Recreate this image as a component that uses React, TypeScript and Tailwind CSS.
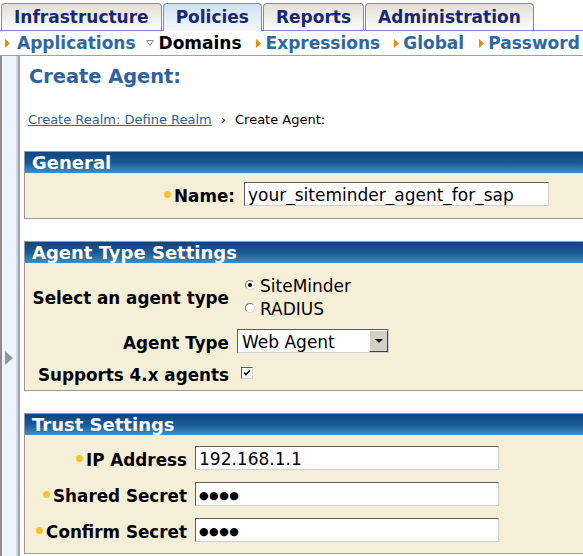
import React from "react";

const F = "font-['DejaVu_Sans',Verdana,sans-serif]";

function OrangeArrow() {
  return (
    <svg width="5" height="9" viewBox="0 0 5 9" className="shrink-0">
      <path d="M0 0 L5 4.5 L0 9 Z" fill="#f08a00" />
    </svg>
  );
}

function DownArrow() {
  return (
    <svg width="8" height="6" viewBox="0 0 8 6" className="shrink-0">
      <path d="M0.5 0.5 L7.5 0.5 L4 5.5 Z" fill="none" stroke="#8a8a8a" strokeWidth="1" />
    </svg>
  );
}

function Dot() {
  return <span className="inline-block w-[7px] h-[7px] rounded-full bg-[#f7c232] mr-[3px] mb-[3px] shrink-0" />;
}

function SectionHeader({ title }: { title: string }) {
  return (
    <div className="h-[21px] bg-gradient-to-b from-[#0f4580] via-[#1a5893] to-[#3f8fc6] text-white font-bold text-[18px] leading-[21px] pl-[7px]">
      {title}
    </div>
  );
}

function TextBox({ value, width, password }: { value: string; width: number; password?: boolean }) {
  return (
    <div
      className="h-[24px] bg-white border border-t-[#5c5c5c] border-l-[#5c5c5c] border-b-[#d0d0d0] border-r-[#d0d0d0] flex items-center pl-[3px] pt-[3px] text-[17px] text-black leading-[19px] whitespace-nowrap overflow-hidden"
      style={{ width }}
    >
      {password ? <span className="text-[11px] tracking-[0.5px] leading-[19px]">●●●●</span> : value}
    </div>
  );
}

const LABEL = "h-[24px] pt-[4px] leading-[20px] font-bold text-black whitespace-nowrap";

export default function App() {
  const tabs = [
    { name: "Infrastructure", active: false },
    { name: "Policies", active: true },
    { name: "Reports", active: false },
    { name: "Administration", active: false },
  ];
  return (
    <div className={`${F} w-[583px] h-[556px] overflow-hidden bg-white flex flex-col`}>
      {/* Tabs */}
      <div className="h-[31px] shrink-0 flex items-end pl-[1px] gap-[1px] border-b border-[#7a8aba]">
        {tabs.map((t) => (
          <div
            key={t.name}
            className={`h-[27px] px-[12px] border border-b-0 border-[#8c8c8c] rounded-t-[4px] text-[17px] font-bold text-[#17286e] leading-[26px] whitespace-nowrap ${
              t.active
                ? "bg-gradient-to-b from-[#cfe1f4] to-[#f6f9fd] -mb-px h-[28px]"
                : "bg-gradient-to-b from-[#e3dfd6] to-[#fcfcfb]"
            }`}
          >
            {t.name}
          </div>
        ))}
      </div>
      {/* Sub nav */}
      <div className="h-[25px] shrink-0 flex items-center pl-[5px] border-b border-[#a0a0a0] text-[17px] font-bold leading-[24px] whitespace-nowrap">
        <div className="flex items-center gap-[7px] text-[#2f67a3]">
          <OrangeArrow />
          <span>Applications</span>
        </div>
        <div className="flex items-center gap-[5px] ml-[10px] text-black">
          <DownArrow />
          <span>Domains</span>
        </div>
        <div className="flex items-center gap-[5px] ml-[14px] text-[#2f67a3]">
          <OrangeArrow />
          <span>Expressions</span>
        </div>
        <div className="flex items-center gap-[4px] ml-[14px] text-[#2f67a3]">
          <OrangeArrow />
          <span>Global</span>
        </div>
        <div className="flex items-center gap-[4px] ml-[15px] text-[#2f67a3]">
          <OrangeArrow />
          <span>Password</span>
        </div>
      </div>
      {/* Main */}
      <div className="flex-1 flex min-h-0">
        {/* Sidebar */}
        <div className="w-[20px] shrink-0 flex">
          <div className="w-[2px] bg-[#8e8e8e]" />
          <div className="flex-1 bg-[#eef4fe] flex flex-col items-center">
            <svg width="8" height="14" viewBox="0 0 8 14" className="mt-[295px] ml-[-1px]">
              <path d="M0 0 L8 7 L0 14 Z" fill="#8a98a6" />
            </svg>
          </div>
          <div className="w-[2px] bg-[#c9d7e9]" />
          <div className="w-[2px] bg-[#9ea4ac]" />
        </div>
        {/* Content */}
        <div className="flex-1 min-w-0">
          <div className="ml-[9px] mt-[9px] text-[19.4px] leading-[23px] font-bold text-[#30629b]">Create Agent:</div>
          <div className="ml-[8px] mt-[24px] text-[13px] leading-[16px] whitespace-nowrap">
            <span className="text-[#30629b] underline">Create Realm: Define Realm</span>
            <span className="text-black mx-[9px]">›</span>
            <span className="text-black">Create Agent:</span>
          </div>

          {/* General */}
          <div className="ml-[4px] mt-[23px] w-[620px] border border-[#9a9a9a] bg-[#f6efd8]">
            <SectionHeader title="General" />
            <div className="pt-[9px] pb-[12px] flex items-center text-[16.8px]">
              <div className={`w-[210px] flex justify-end items-center ${LABEL}`}>
                <Dot />
                <span>Name:</span>
              </div>
              <div className="ml-[9px]">
                <TextBox value="your_siteminder_agent_for_sap" width={305} />
              </div>
            </div>
          </div>

          {/* Agent Type Settings */}
          <div className="ml-[4px] mt-[22px] w-[620px] border border-[#9a9a9a] bg-[#f6efd8]">
            <SectionHeader title="Agent Type Settings" />
            <div className="pt-[10px] pb-[5px] text-[16.8px]">
              <div className="flex items-center">
                <div className={`w-[204px] text-right ${LABEL}`}>Select an agent type</div>
                <div className="ml-[8px] flex flex-col text-[17px] text-black">
                  <div className="h-[23px] flex items-center">
                    <span className="ml-[8px] w-[10px] h-[10px] rounded-full border border-t-[#707070] border-l-[#707070] border-b-[#dcdcdc] border-r-[#dcdcdc] bg-white flex items-center justify-center">
                      <span className="w-[4px] h-[4px] rounded-full bg-black" />
                    </span>
                    <span className="ml-[5px] pt-[2px] leading-[20px]">SiteMinder</span>
                  </div>
                  <div className="h-[23px] flex items-center">
                    <span className="ml-[8px] w-[10px] h-[10px] rounded-full border border-t-[#707070] border-l-[#707070] border-b-[#dcdcdc] border-r-[#dcdcdc] bg-white" />
                    <span className="ml-[5px] pt-[2px] leading-[20px]">RADIUS</span>
                  </div>
                </div>
              </div>
              <div className="flex items-center mt-[10px] h-[24px]">
                <div className={`w-[204px] text-right ${LABEL}`}>Agent Type</div>
                <div className="ml-[8px] w-[152px] h-[24px] bg-white border border-t-[#5c5c5c] border-l-[#5c5c5c] border-b-[#d0d0d0] border-r-[#d0d0d0] flex items-center">
                  <span className="flex-1 pl-[4px] pt-[3px] text-[17px] text-black leading-[19px]">Web Agent</span>
                  <div className="w-[19px] h-[22px] bg-[#d4d0c8] border border-t-white border-l-white border-b-[#404040] border-r-[#404040] flex items-center justify-center">
                    <svg width="8" height="4" viewBox="0 0 8 4">
                      <path d="M0 0 L8 0 L4 4 Z" fill="#000" />
                    </svg>
                  </div>
                </div>
              </div>
              <div className="flex items-center mt-[7px] h-[25px]">
                <div className={`w-[204px] text-right ${LABEL}`}>Supports 4.x agents</div>
                <div className="ml-[12px] w-[12px] h-[12px] bg-white border border-t-[#5c5c5c] border-l-[#5c5c5c] border-b-[#d8d8d8] border-r-[#d8d8d8] flex items-center justify-center">
                  <svg width="8" height="8" viewBox="0 0 8 8">
                    <path d="M1 3.5 L3 5.5 L7 1.5" fill="none" stroke="#000" strokeWidth="1.6" />
                  </svg>
                </div>
              </div>
            </div>
          </div>

          {/* Trust Settings */}
          <div className="ml-[4px] mt-[22px] w-[620px] border border-[#9a9a9a] bg-[#f6efd8]">
            <SectionHeader title="Trust Settings" />
            <div className="pt-[11px] pb-[11px] flex flex-col gap-[12px] text-[16.8px]">
              {[
                { label: "IP Address", value: "192.168.1.1", pw: false },
                { label: "Shared Secret", value: "", pw: true },
                { label: "Confirm Secret", value: "", pw: true },
              ].map((r) => (
                <div key={r.label} className="flex items-center">
                  <div className={`w-[162px] flex justify-end items-center ${LABEL}`}>
                    <Dot />
                    <span>{r.label}</span>
                  </div>
                  <div className="ml-[8px]">
                    <TextBox value={r.value} width={304} password={r.pw} />
                  </div>
                </div>
              ))}
            </div>
          </div>
        </div>
      </div>
    </div>
  );
}
